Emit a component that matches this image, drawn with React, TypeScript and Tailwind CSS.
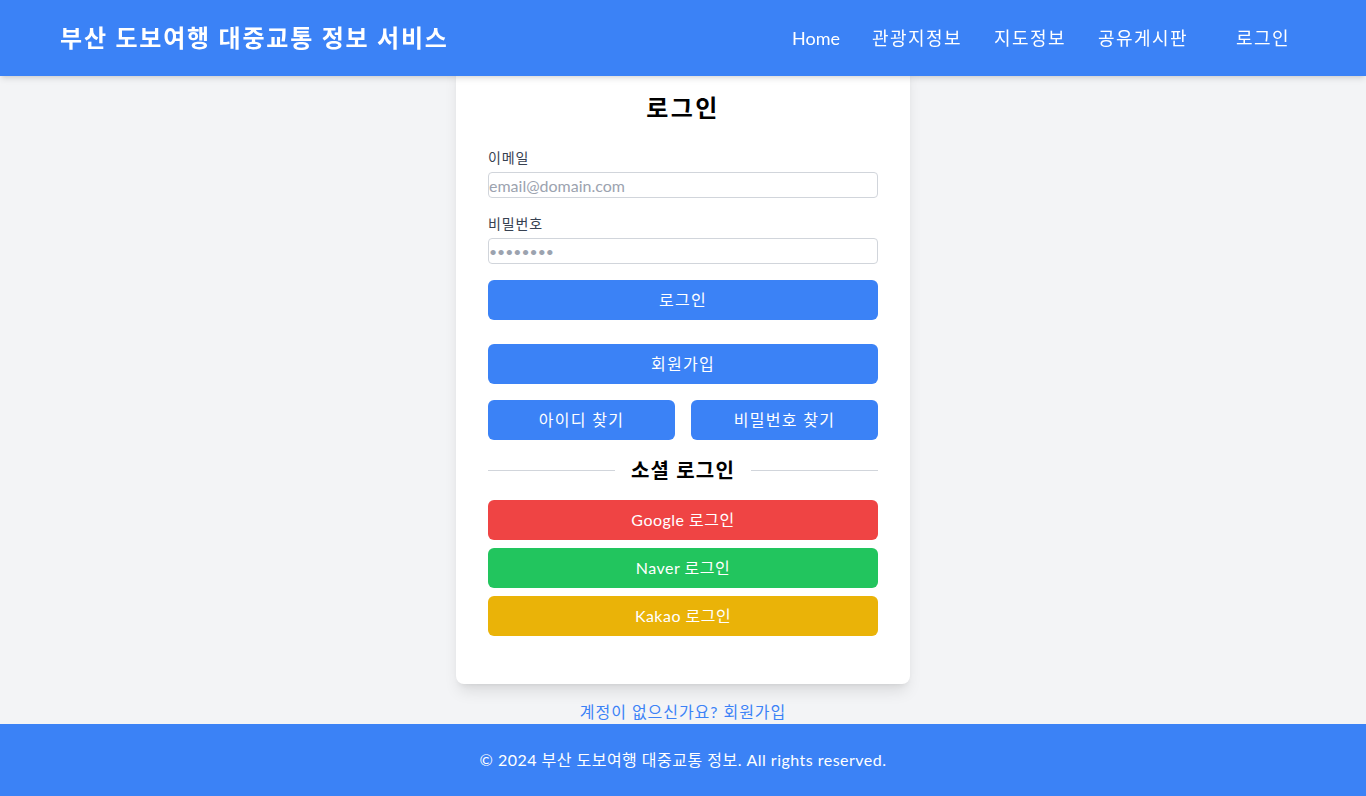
const NAV = ["Home", "관광지정보", "지도정보", "공유게시판"];

const SOCIAL = [
  { label: "Google 로그인", cls: "bg-[#ef4444]" },
  { label: "Naver 로그인", cls: "bg-[#22c55e]" },
  { label: "Kakao 로그인", cls: "bg-[#eab308]" },
];

export default function App() {
  return (
    <div className="min-h-screen bg-[#f3f4f6] font-['Lato','Noto_Sans_CJK_KR',sans-serif] text-black">
      {/* Header */}
      <header className="fixed top-0 left-0 right-0 z-10 h-[76px] bg-[#3b82f6] shadow-md">
        <div className="h-full px-[60px] flex items-center justify-between">
          <h1 className="text-2xl font-bold text-white tracking-[0.075em]">부산 도보여행 대중교통 정보 서비스</h1>
          <nav className="flex items-center">
            <div className="flex items-center gap-8">
              {NAV.map((item, i) => (
                <a key={item} className={`text-lg text-white ${i > 0 ? "tracking-[0.08em]" : ""}`}>
                  {item}
                </a>
              ))}
            </div>
            <button className="ml-8 px-4 text-lg text-white tracking-[0.08em]">로그인</button>
          </nav>
        </div>
      </header>

      <main className="pt-[60px] flex flex-col items-center">
        <div className="w-[454px] bg-white rounded-lg shadow-lg px-8 pt-8 pb-12">
          <h2 className="text-2xl font-bold text-center mb-6 tracking-[0.1em]">로그인</h2>

          <div className="mb-4">
            <label className="block text-sm text-[#374151] mb-1 tracking-[0.06em]">이메일</label>
            <input
              type="email"
              placeholder="email@domain.com"
              className="w-full h-[26px] border border-[#d1d5db] rounded text-base placeholder:text-[#9ca3af] outline-none"
            />
          </div>
          <div className="mb-4">
            <label className="block text-sm text-[#374151] mb-1 tracking-[0.06em]">비밀번호</label>
            <input
              type="password"
              placeholder="••••••••"
              className="w-full h-[26px] border border-[#d1d5db] rounded text-sm placeholder:text-[#9ca3af] outline-none"
            />
          </div>

          <button className="w-full h-10 rounded-md bg-[#3b82f6] text-white text-base tracking-[0.08em]">로그인</button>
          <button className="w-full h-10 mt-6 rounded-md bg-[#3b82f6] text-white text-base tracking-[0.08em]">회원가입</button>

          <div className="grid grid-cols-2 gap-4 mt-4">
            <button className="h-10 rounded-md bg-[#3b82f6] text-white text-base tracking-[0.08em]">아이디 찾기</button>
            <button className="h-10 rounded-md bg-[#3b82f6] text-white text-base tracking-[0.08em]">비밀번호 찾기</button>
          </div>

          <div className="flex items-center my-4">
            <div className="flex-1 border-t border-[#d1d5db]" />
            <span className="mx-4 text-xl font-bold tracking-[0.06em]">소셜 로그인</span>
            <div className="flex-1 border-t border-[#d1d5db]" />
          </div>

          <div className="flex flex-col gap-2">
            {SOCIAL.map((s) => (
              <button key={s.label} className={`w-full h-10 rounded-md text-white text-base tracking-[0.03em] ${s.cls}`}>
                {s.label}
              </button>
            ))}
          </div>
        </div>

        <a className="mt-4 text-base text-[#3b82f6] tracking-[0.06em]">계정이 없으신가요? 회원가입</a>
      </main>

      <footer className="bg-[#3b82f6] py-6 text-center text-white text-base tracking-[0.03em]">
        © 2024 부산 도보여행 대중교통 정보. All rights reserved.
      </footer>
    </div>
  );
}
